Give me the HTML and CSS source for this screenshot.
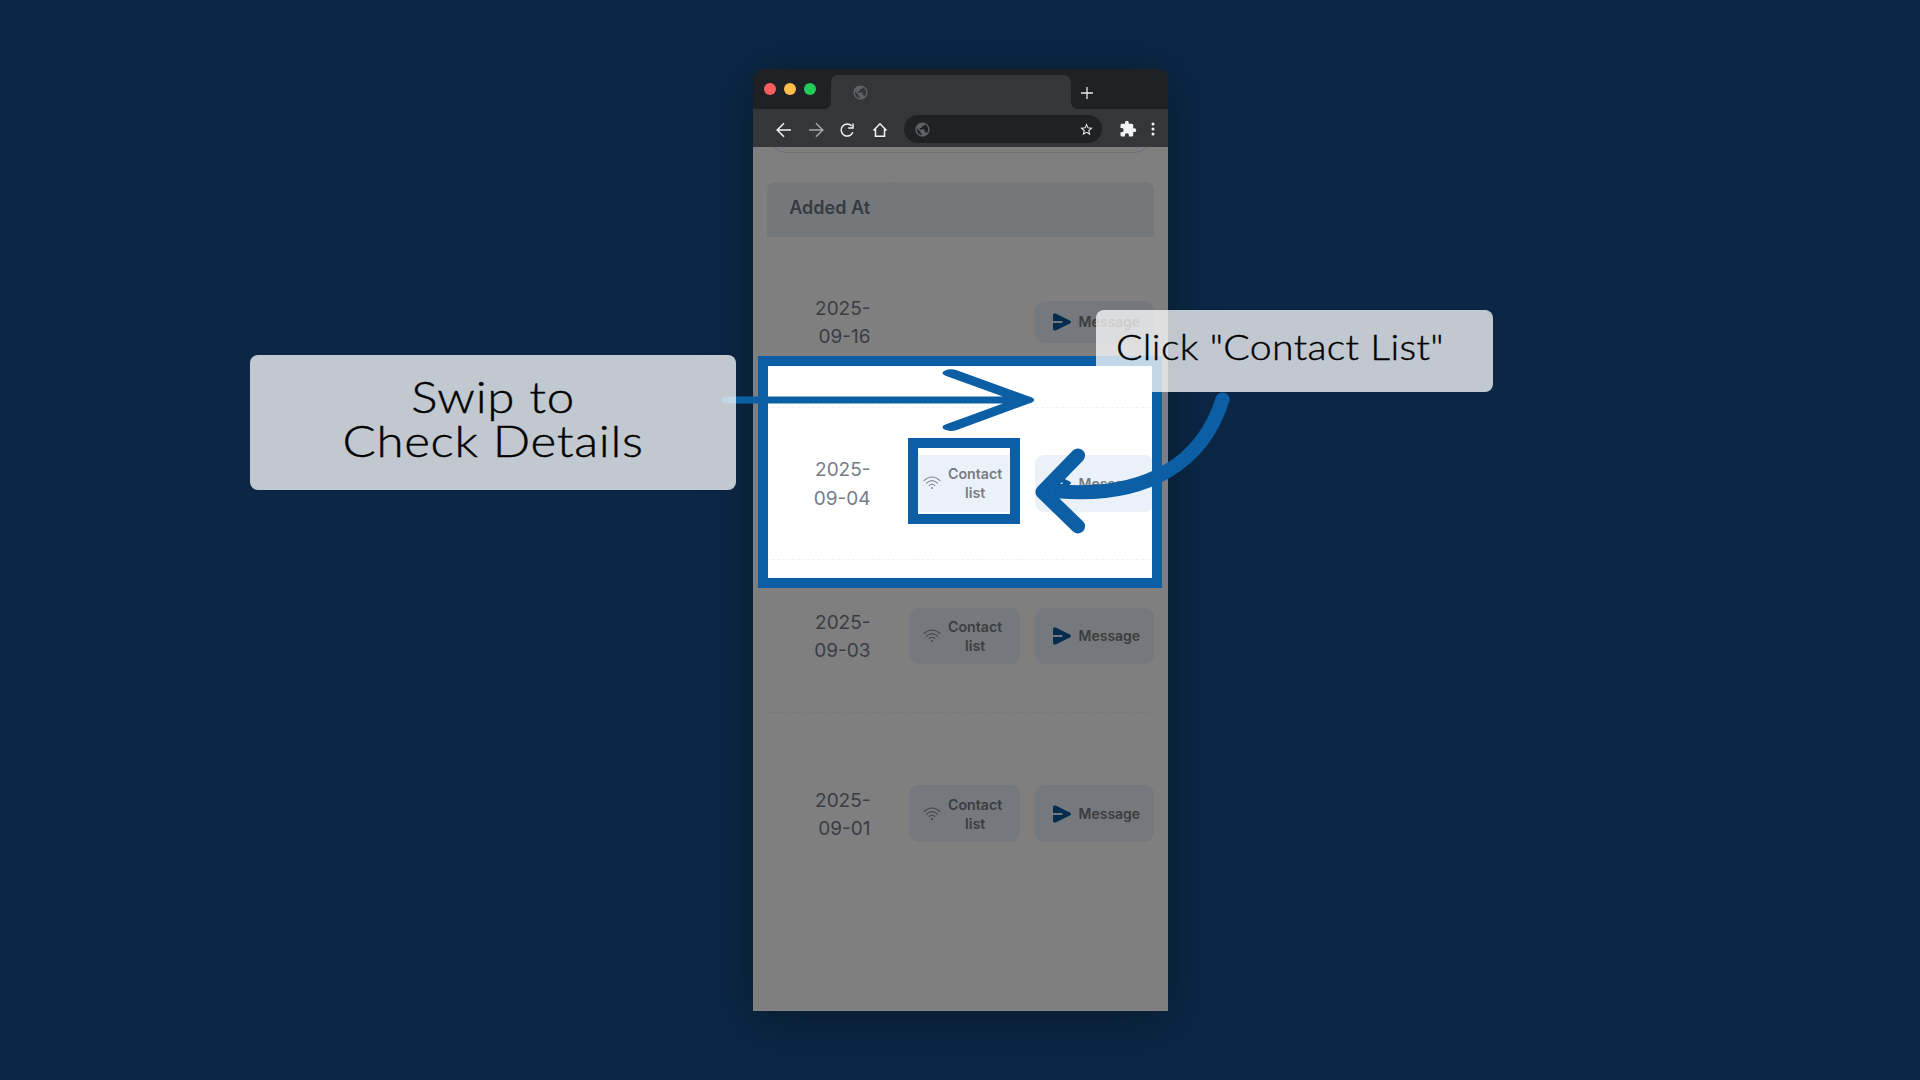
FILE: index.html
```html
<!DOCTYPE html>
<html lang="en">
<head>
<meta charset="utf-8">
<title>Contact list guide</title>
<link rel="stylesheet" href="styles.css">
</head>
<body>
<svg width="0" height="0" class="defs">
  <symbol id="globe" viewBox="0 0 24 24"><path d="M12 2C6.48 2 2 6.48 2 12s4.48 10 10 10 10-4.48 10-10S17.52 2 12 2zm-1 17.93c-3.95-.49-7-3.85-7-7.93 0-.62.08-1.21.21-1.79L9 15v1c0 1.1.9 2 2 2v1.93zm6.9-2.54c-.26-.81-1-1.39-1.9-1.39h-1v-3c0-.55-.45-1-1-1H8v-2h2c.55 0 1-.45 1-1V7h2c1.100 0 2-.9 2-2v-.41c2.930 1.190 5 4.060 5 7.410 0 2.080-.8 3.970-2.100 5.390z"/></symbol>
  <symbol id="wifi" viewBox="0 0 18 14"><g fill="none" stroke="currentColor" stroke-width="1.1" stroke-linecap="round"><path d="M1 4.600Q9-2.600 17 4.600M3.500 7.100Q9 2.200 14.500 7.100M6.200 9.500Q9 7 11.800 9.500"/></g><circle cx="9" cy="12" r="1.100" fill="currentColor"/></symbol>
  <symbol id="send" viewBox="0 0 20 18"><path d="M1 2.200C1 .700 2.400.100 3.700.600L17.800 7.400C19.400 8.200 19.400 9.800 17.800 10.600L3.700 17.400C2.400 17.900 1 17.300 1 15.800V10.100H9.600Q10.700 10.100 10.700 9T9.600 7.900H1Z"/></symbol>
</svg>
<main class="stage">
  <section class="window">
    <header class="tabs">
      <div class="lights"><i class="red"></i><i class="yellow"></i><i class="green"></i></div>
      <div class="tab"><svg class="globe"><use href="#globe"/></svg></div>
      <svg class="plus" viewBox="0 0 12 12"><path d="M6 0V12M0 6H12"/></svg>
    </header>
    <nav class="toolbar">
      <svg class="nav" viewBox="0 0 18 18"><path d="M16 9H2.500M9 2.200L2.200 9L9 15.800"/></svg>
      <svg class="nav forward" viewBox="0 0 18 18"><path d="M2 9H15.500M9 2.200L15.800 9L9 15.800"/></svg>
      <svg class="nav reload" viewBox="0 0 18 18"><path d="M14.800 11.200A6 6 0 1 1 13.600 5M15 2.500V7H10.200"/></svg>
      <svg class="nav home" viewBox="0 0 18 18"><path d="M2.500 9.500L9 2.800L15.500 9.500M4.500 8V15.200H13.500V8"/></svg>
      <div class="address">
        <svg class="globe"><use href="#globe"/></svg>
        <svg class="star" viewBox="0 0 24 24"><path d="M22 9.240l-7.190-.620L12 2 9.190 8.630 2 9.240l5.460 4.730L5.820 21 12 17.270 18.180 21l-1.630-7.030L22 9.240zM12 15.400l-3.760 2.270 1-4.280-3.320-2.880 4.380-.380L12 6.100l1.710 4.040 4.380.380-3.320 2.880 1 4.280L12 15.400z"/></svg>
      </div>
      <svg class="ext" viewBox="0 0 24 24"><path d="M20.500 11H19V7c0-1.100-.9-2-2-2h-4V3.500a2.500 2.500 0 0 0-5 0V5H4c-1.100 0-2 .9-2 2v3.800h1.500a2.700 2.700 0 0 1 0 5.400H2V20c0 1.100.9 2 2 2h3.800v-1.500a2.700 2.700 0 0 1 5.400 0V22H17c1.100 0 2-.9 2-2v-4h1.500a2.500 2.500 0 0 0 0-5z"/></svg>
      <svg class="dots" viewBox="0 0 4 14"><circle cx="2" cy="2" r="1.500"/><circle cx="2" cy="7" r="1.500"/><circle cx="2" cy="12" r="1.500"/></svg>
    </nav>
    <div class="page">
      <div class="panel-edge"></div>
      <div class="table">
        <div class="row head"><div class="cell">Added At</div></div>
        <div class="row first">
          <div class="date">2025-<br>09-16</div>
          <div class="btn message"><svg class="send"><use href="#send"/></svg><span>Message</span></div>
        </div>
        <div class="row">
          <div class="date">2025-<br>09-04</div>
          <div class="btn contact"><svg class="wifi"><use href="#wifi"/></svg><span>Contact<br>list</span></div>
          <div class="btn message"><svg class="send"><use href="#send"/></svg><span>Message</span></div>
        </div>
        <div class="row">
          <div class="date">2025-<br>09-03</div>
          <div class="btn contact"><svg class="wifi"><use href="#wifi"/></svg><span>Contact<br>list</span></div>
          <div class="btn message"><svg class="send"><use href="#send"/></svg><span>Message</span></div>
        </div>
        <div class="row last">
          <div class="date">2025-<br>09-01</div>
          <div class="btn contact"><svg class="wifi"><use href="#wifi"/></svg><span>Contact<br>list</span></div>
          <div class="btn message"><svg class="send"><use href="#send"/></svg><span>Message</span></div>
        </div>
      </div>
      <div class="spotlight"></div>
      <div class="focus"></div>
    </div>
  </section>
  <svg class="arrows" viewBox="0 0 1920 1080">
    <g transform="scale(2.4 1)" stroke-width="7.200"><path d="M304 400H424M396.300 373L427.300 400L396.300 427.200"/></g>
    <path stroke-width="14.200" d="M1222.500 399.500C1203 462 1148 498 1060 491.500M1078 455.500L1042.500 492L1078 526.300"/>
  </svg>
  <div class="callout swipe"><p>Swip to</p><p>Check Details</p></div>
  <div class="callout click"><p>Click "Contact List"</p></div>
</main>
</body>
</html>
```
FILE: styles.css
```css
* { box-sizing: border-box; }
body { margin: 0; background: #0b2745; font-family: Inter, "Liberation Sans", sans-serif; }
.defs { position: absolute; }
svg { display: block; flex: none; }

.stage {
  position: relative;
  width: 1920px;
  height: 1080px;
  padding-top: 69px;
  display: flex;
  justify-content: center;
  align-items: flex-start;
  overflow: hidden;
}

.window {
  width: 415px;
  height: 942px;
  display: flex;
  flex-direction: column;
  border-radius: 10px 10px 0 0;
  box-shadow: 0 8px 50px rgba(0, 0, 0, .35);
}

/* browser chrome */
.tabs {
  height: 40px;
  display: flex;
  align-items: flex-end;
  background: #202124;
  border-radius: 10px 10px 0 0;
}
.lights { width: 78.500px; height: 40px; padding: 14px 0 0 11.500px; display: flex; gap: 8px; }
.lights i { width: 12px; height: 12px; border-radius: 50%; }
.red { background: #ff5f5c; }
.yellow { background: #ffbd4c; }
.green { background: #23cc57; }
.tab {
  position: relative;
  width: 240px;
  height: 34px;
  padding: 8.500px 0 0 20.500px;
  background: #35363a;
  border-radius: 7px 7px 0 0;
}
.tab::before, .tab::after {
  content: "";
  position: absolute;
  bottom: 0;
  width: 7px;
  height: 7px;
}
.tab::before { left: -7px; background: radial-gradient(circle at 0 0, #202124 6.5px, #35363a 7.5px); }
.tab::after { right: -7px; background: radial-gradient(circle at 100% 0, #202124 6.5px, #35363a 7.5px); }
.globe { width: 17px; height: 17px; fill: #5f6267; }
.plus { width: 12px; height: 12px; margin: 0 0 10px 9.500px; fill: none; stroke: #e8eaed; stroke-width: 1.3; }

.toolbar { height: 38px; padding: 2px 0 0 22.500px; display: flex; align-items: center; background: #35363a; }
.nav { width: 18px; height: 18px; margin: 1px 14px 0 0; fill: none; stroke: #f1f3f4; stroke-width: 1.5; }
.forward { stroke: #a6a8ab; margin-right: 13px; }
.reload { margin-right: 15px; }
.home { margin-right: 15px; }
.address {
  width: 198px;
  height: 28px;
  padding: 0 8.500px 0 10px;
  display: flex;
  align-items: center;
  justify-content: space-between;
  background: #202124;
  border-radius: 14px;
}
.star { width: 15px; height: 15px; margin-top: 1px; fill: #f1f3f4; }
.ext { width: 18px; height: 18px; margin: 0 14px 0 17px; fill: #f1f3f4; }
.dots { width: 4px; height: 14px; fill: #f1f3f4; }

/* page */
.page { position: relative; flex: 1; background: #fff; overflow: hidden; }
.panel-edge { height: 36px; margin: -30px 17px 29px; border: 1px solid #dcdfe4; border-radius: 16px; }
.table { margin: 0 14px 0 14px; }
.row { height: 152.500px; display: flex; align-items: center; border-bottom: 1px dashed #f0f1f3; }
.head { height: 55px; background: #ebf1f7; border: 0; border-radius: 8px 8px 0 0; }
.head .cell {
  width: 123px;
  height: 55px;
  padding: 0 18.500px 0 0;
  line-height: 52px;
  text-align: right;
  font-size: 18px;
  font-weight: 600;
  color: #6c7681;
  border-right: 1px solid #e6ecf2;
}
.first { height: 170.500px; }
.last { height: 202px; border: 0; }
.date {
  width: 104px;
  margin-right: 38px;
  padding-top: 3px;
  text-align: right;
  font-size: 19px;
  line-height: 28.500px;
  color: #757b86;
}
.btn {
  height: 56.500px;
  display: flex;
  align-items: center;
  background: #ebf1f8;
  border-radius: 9px;
  font-size: 14px;
  font-weight: 600;
  line-height: 19px;
  color: #777b83;
  text-align: center;
}
.contact { width: 111.500px; padding-left: 14.500px; gap: 7px; font-size: 14.200px; }
.message { width: 118.500px; padding-left: 17px; gap: 6.500px; margin-left: auto; }
.first .message { height: 42.500px; }
.wifi { width: 18px; height: 14px; color: #868b94; }
.send { width: 20px; height: 18px; fill: #075a9f; }

.spotlight {
  position: absolute;
  left: 5.500px;
  top: 209px;
  width: 404px;
  height: 232px;
  border: 10px solid #0c5fa5;
  box-shadow: 0 0 0 1200px rgba(0, 0, 0, .5);
}
.focus {
  position: absolute;
  left: 155.500px;
  top: 291px;
  width: 112px;
  height: 86px;
  border: 10px solid #0c5fa5;
}

/* annotations */
.arrows {
  position: absolute;
  inset: 0;
  width: 1920px;
  height: 1080px;
  fill: none;
  stroke: #0c5fa5;
  stroke-linecap: round;
  stroke-linejoin: round;
}
.callout {
  position: absolute;
  background: rgba(255, 255, 255, .75);
  border-radius: 8px;
  color: #000;
  font-family: Lato, "Open Sans", sans-serif;
  font-weight: 300;
  text-align: center;
  white-space: nowrap;
}
.callout p { margin: 0; transform: scaleX(1.12); -webkit-text-stroke: .4px #000; }
.swipe { left: 250px; top: 354.500px; width: 486px; height: 135px; padding-top: 19px; font-size: 44px; line-height: 44px; letter-spacing: .6px; }
.click { left: 1096px; top: 309.500px; width: 397px; height: 82px; padding: 14px 0 0 20px; font-size: 35px; line-height: 44px; letter-spacing: .3px; text-align: left; }
.click p { transform-origin: 0 0; }
```
